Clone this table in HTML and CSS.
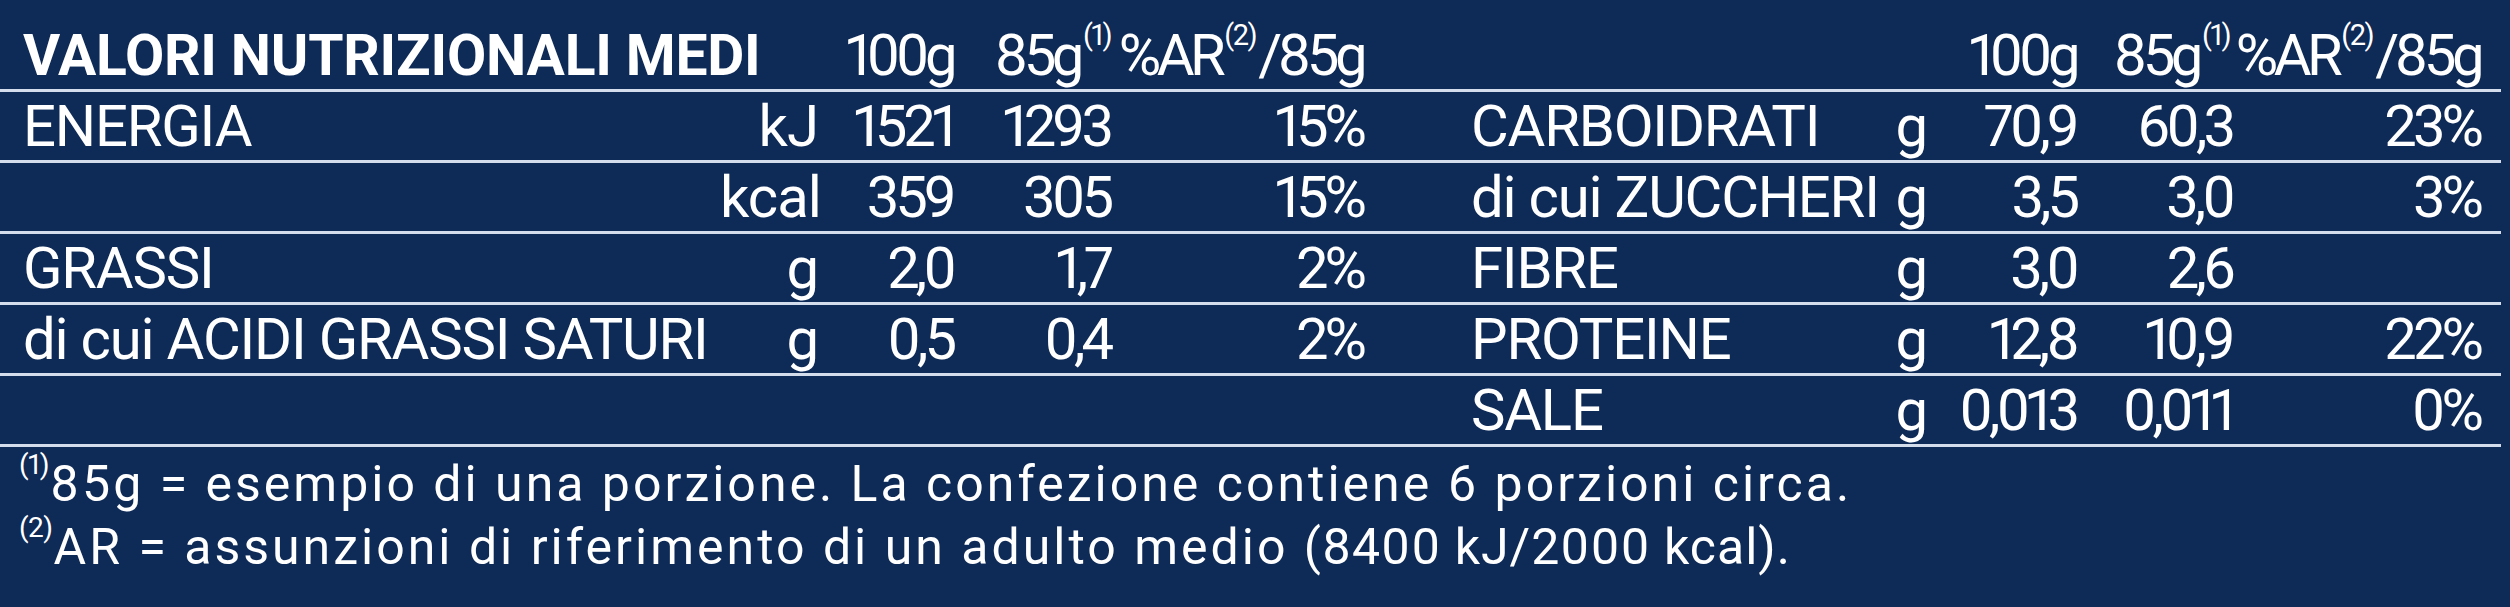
FILE: index.html
```html
<!DOCTYPE html>
<html lang="it">
<head>
<meta charset="utf-8">
<title>Valori nutrizionali medi</title>
<link rel="stylesheet" href="styles.css">
</head>
<body>
<main class="label">
  <section class="table">
    <div class="row head">
      <div class="title">VALORI NUTRIZIONALI MEDI</div>
      <div class="num hd">100g</div>
      <div class="num hd nudge">85g<sup>(1)</sup></div>
      <div class="num hd">%AR<sup>(2)</sup>/85g</div>
      <div class="gap"></div>
      <div></div>
      <div></div>
      <div class="num hd">100g</div>
      <div class="num hd">85g<sup>(1)</sup></div>
      <div class="num hd">%AR<sup>(2)</sup>/85g</div>
    </div>
    <div class="row">
      <div class="name">ENERGIA</div>
      <div class="unit">kJ</div>
      <div class="num">1521</div>
      <div class="num">1293</div>
      <div class="num">15%</div>
      <div class="gap"></div>
      <div class="name">CARBOIDRATI</div>
      <div class="unit">g</div>
      <div class="num">70,9</div>
      <div class="num">60,3</div>
      <div class="num">23%</div>
    </div>
    <div class="row">
      <div class="name"></div>
      <div class="unit">kcal</div>
      <div class="num">359</div>
      <div class="num">305</div>
      <div class="num">15%</div>
      <div class="gap"></div>
      <div class="name">di cui ZUCCHERI</div>
      <div class="unit">g</div>
      <div class="num">3,5</div>
      <div class="num">3,0</div>
      <div class="num">3%</div>
    </div>
    <div class="row">
      <div class="name">GRASSI</div>
      <div class="unit">g</div>
      <div class="num">2,0</div>
      <div class="num">1,7</div>
      <div class="num">2%</div>
      <div class="gap"></div>
      <div class="name">FIBRE</div>
      <div class="unit">g</div>
      <div class="num">3,0</div>
      <div class="num">2,6</div>
      <div class="num"></div>
    </div>
    <div class="row">
      <div class="name">di cui ACIDI GRASSI SATURI</div>
      <div class="unit">g</div>
      <div class="num">0,5</div>
      <div class="num">0,4</div>
      <div class="num">2%</div>
      <div class="gap"></div>
      <div class="name">PROTEINE</div>
      <div class="unit">g</div>
      <div class="num">12,8</div>
      <div class="num">10,9</div>
      <div class="num">22%</div>
    </div>
    <div class="row">
      <div class="name"></div>
      <div class="unit"></div>
      <div class="num"></div>
      <div class="num"></div>
      <div class="num"></div>
      <div class="gap"></div>
      <div class="name">SALE</div>
      <div class="unit">g</div>
      <div class="num">0,013</div>
      <div class="num">0,011</div>
      <div class="num">0%</div>
    </div>
  </section>
  <section class="notes">
    <p><sup>(1)</sup>85g = esempio di una porzione. La confezione contiene 6 porzioni circa.</p>
    <p><sup>(2)</sup>AR = assunzioni di riferimento di un adulto medio <span class="figs">(8400 kJ/2000 kcal).</span></p>
  </section>
</main>
</body>
</html>
```
FILE: styles.css
```css
html, body {
  margin: 0;
  padding: 0;
  background: #0e2a57;
}

body {
  width: 2510px;
  height: 607px;
  overflow: hidden;
  color: #ffffff;
  font-family: Roboto, "Liberation Sans", sans-serif;
  font-weight: 400;
}

.label {
  width: 2510px;
  height: 607px;
}

.table {
  width: 2501px;
}

.row {
  box-sizing: border-box;
  display: grid;
  grid-template-columns: 697px 98px 135px 157px 253px 108px 389px 67px 149px 156px 248px;
  align-items: center;
  height: 71px;
  padding: 0 21px 0 23px;
  border-bottom: 3px solid #d3ddeb;
  font-size: 58px;
  line-height: 1;
  white-space: nowrap;
}

.row.head {
  height: 92px;
  align-items: end;
  padding-bottom: 5px;
}

.title {
  grid-column: span 2;
  font-weight: 700;
  font-size: 57px;
  letter-spacing: -0.2px;
}

.name {
  text-align: left;
  letter-spacing: -1.2px;
}

.unit {
  text-align: right;
  letter-spacing: -1px;
}

.num {
  text-align: right;
  font-variant-numeric: proportional-nums;
  letter-spacing: -4px;
}

.hd {
  letter-spacing: -4.5px;
}

.nudge {
  margin-right: -3px;
}

sup {
  font-size: 0.5em;
  line-height: 0;
  vertical-align: 1.05em;
  letter-spacing: -1.5px;
  margin-left: 3px;
  margin-right: 2px;
}

.notes {
  padding-top: 6px;
  padding-left: 19px;
  font-size: 50px;
  font-weight: 400;
  line-height: 63px;
  letter-spacing: 3px;
  white-space: nowrap;
  font-variant-numeric: proportional-nums;
}

.notes p {
  margin: 0;
}

.notes .figs {
  letter-spacing: 1px;
}

.notes sup {
  font-size: 0.56em;
  vertical-align: 0.95em;
  letter-spacing: -0.5px;
  margin: 0 1px 0 0;
}
```
